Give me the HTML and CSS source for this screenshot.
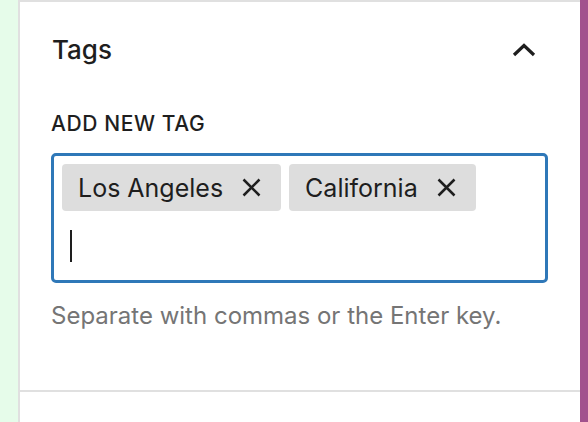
FILE: index.html
```html
<!DOCTYPE html>
<html>
<head>
<meta charset="utf-8">
<link rel="stylesheet" href="styles.css">
</head>
<body>
<div class="frame">
  <div class="strip-left"></div>
  <div class="sidebar">
    <section class="panel">
      <div class="panel-header">
        <h2 class="panel-title">Tags</h2>
        <svg class="chevron" width="24" height="14" viewBox="0 0 24 14"><polyline points="2,12 12,2.5 22,12" fill="none" stroke="#1e1e1e" stroke-width="3.2"/></svg>
      </div>
      <div class="panel-body">
        <div class="field-label">ADD NEW TAG</div>
        <div class="token-field">
          <div class="tokens">
            <span class="token"><span class="token-text">Los Angeles</span><svg class="token-x" width="19" height="19" viewBox="0 0 19 19"><path d="M1.5 1.5 L17.5 17.5 M17.5 1.5 L1.5 17.5" stroke="#1e1e1e" stroke-width="2.5" fill="none"/></svg></span>
            <span class="token"><span class="token-text">California</span><svg class="token-x" width="19" height="19" viewBox="0 0 19 19"><path d="M1.5 1.5 L17.5 17.5 M17.5 1.5 L1.5 17.5" stroke="#1e1e1e" stroke-width="2.5" fill="none"/></svg></span>
          </div>
          <div class="input-row"><span class="caret"></span></div>
        </div>
        <p class="help">Separate with commas or the Enter key.</p>
      </div>
    </section>
    <section class="panel-next"></section>
  </div>
  <div class="strip-right"></div>
</div>
</body>
</html>
```
FILE: styles.css
```css
html, body {
  margin: 0;
  padding: 0;
  background: #ffffff;
}
body {
  font-family: Inter, "Noto Sans", "Liberation Sans", sans-serif;
  color: #1e1e1e;
}
.frame {
  display: flex;
  width: 588px;
  height: 422px;
  overflow: hidden;
}
.strip-left {
  width: 18px;
  background: #e6fcea;
  flex: none;
}
.sidebar {
  width: 560px;
  flex: none;
  border-left: 2px solid #e0e0e0;
  background: #fff;
  display: flex;
  flex-direction: column;
}
.strip-right {
  flex: 1;
  background: #a2528d;
}
.panel {
  border-top: 2px solid #e0e0e0;
  border-bottom: 2px solid #e0e0e0;
  height: 392px;
  box-sizing: border-box;
  flex: none;
}
.panel-header {
  height: 96px;
  display: flex;
  align-items: center;
  justify-content: space-between;
  padding: 0 44px 0 32px;
}
.panel-title {
  margin: 0;
  font-size: 26px;
  font-weight: 500;
  line-height: 32px;
}
.chevron {
  display: block;
}
.panel-body {
  padding: 0 32px 0 31px;
}
.field-label {
  margin-top: 12px;
  font-size: 21px;
  font-weight: 500;
  line-height: 28px;
  letter-spacing: 0.6px;
}
.token-field {
  margin-top: 15px;
  height: 130px;
  box-sizing: border-box;
  border: 3px solid #2f78b8;
  border-radius: 5px;
  padding: 8px;
}
.tokens {
  display: flex;
  gap: 8px;
}
.token {
  display: flex;
  align-items: center;
  height: 47px;
  background: #dddddd;
  border-radius: 4px;
  padding: 0 20px 0 16px;
  font-size: 25px;
}
.token-x {
  margin-left: 19px;
  display: block;
}
.input-row {
  margin-top: 8px;
  height: 53px;
  display: flex;
  align-items: center;
  padding-left: 8px;
}
.caret {
  display: block;
  width: 2px;
  height: 32px;
  background: #1e1e1e;
}
.help {
  margin: 17px 0 0 0;
  font-size: 24px;
  line-height: 32px;
  color: #757575;
}
.panel-next {
  flex: 1;
}
```
